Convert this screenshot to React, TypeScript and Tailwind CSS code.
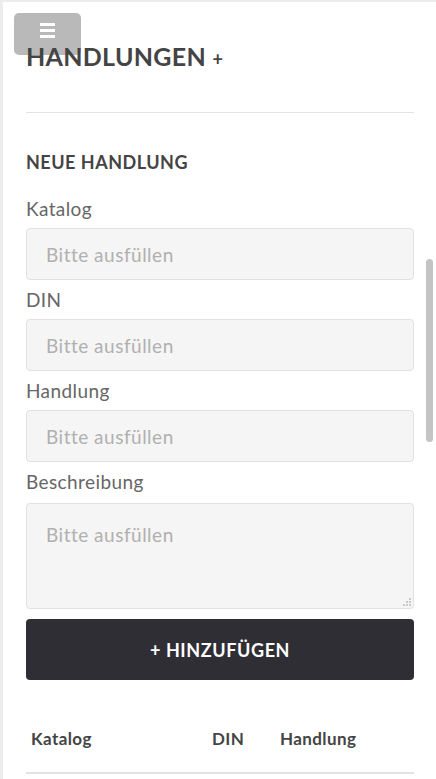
import React from "react";

const font = { fontFamily: "Lato, 'Noto Sans', sans-serif" };

function Field({ label, tall }: { label: string; tall?: boolean }) {
  return (
    <div className="flex flex-col">
      <label className="text-[19px] leading-[27px] tracking-[0.4px] text-[#666] mb-[6px]">{label}</label>
      {tall ? (
        <div className="relative mt-[2px] mb-[10px]">
          <textarea
            placeholder="Bitte ausfüllen"
            className="block h-[106px] w-full resize-none rounded-[4px] border border-[#e1e1e1] bg-[#f5f5f5] px-[19px] py-[19px] text-[19px] leading-[24px] tracking-[0.5px] text-[#444] placeholder:text-[#b0b0b0] outline-none"
          />
          {/* resize grip */}
          <svg className="absolute bottom-[3px] right-[3px]" width="8" height="8" viewBox="0 0 8 8">
            <rect x="6" y="0" width="2" height="2" fill="#c8c8c8" />
            <rect x="3" y="3" width="2" height="2" fill="#c8c8c8" />
            <rect x="6" y="3" width="2" height="2" fill="#c8c8c8" />
            <rect x="0" y="6" width="2" height="2" fill="#c8c8c8" />
            <rect x="3" y="6" width="2" height="2" fill="#c8c8c8" />
            <rect x="6" y="6" width="2" height="2" fill="#c8c8c8" />
          </svg>
        </div>
      ) : (
        <input
          placeholder="Bitte ausfüllen"
          className="h-[52px] w-full rounded-[4px] border border-[#e1e1e1] bg-[#f5f5f5] px-[19px] text-[19px] tracking-[0.5px] text-[#444] placeholder:text-[#b0b0b0] outline-none mb-[6px]"
        />
      )}
    </div>
  );
}

export default function App() {
  return (
    <div className="relative h-[779px] w-[436px] overflow-hidden bg-[#ececec] pt-[2px] pl-[3px]" style={font}>
      <div className="relative h-full bg-white pl-[23px] pr-[22px]">
        {/* menu toggle */}
        <button className="absolute left-[11px] top-[11px] flex h-[42px] w-[67px] items-center justify-center rounded-[5px] bg-[#b9b9b9]">
          <span className="flex flex-col gap-[3px] -mt-[8px]">
            <span className="block h-[3px] w-[15px] bg-white" />
            <span className="block h-[3px] w-[15px] bg-white" />
            <span className="block h-[3px] w-[15px] bg-white" />
          </span>
        </button>

        <h1 className="relative z-10 pt-[39px] text-[25px] font-bold leading-[30px] tracking-[0.3px] text-[#444]">
          HANDLUNGEN <span className="text-[18px]">+</span>
        </h1>

        <hr className="mt-[38px] border-t border-[#e3e3e3]" />

        <h2 className="mt-[37px] text-[18px] font-bold leading-[24px] tracking-[0.5px] text-[#444]">NEUE HANDLUNG</h2>

        <div className="mt-[21px]">
          <Field label="Katalog" />
          <Field label="DIN" />
          <Field label="Handlung" />
          <Field label="Beschreibung" tall />
        </div>

        <button className="flex h-[61px] w-full items-center justify-center rounded-[4px] bg-[#2f2e34] pt-[2px] text-[18px] font-bold tracking-[0.6px] text-white">
          + HINZUFÜGEN
        </button>

        <div className="mt-[46px] flex border-b-2 border-[#e3e3e3] pb-[20px] text-[17px] font-bold tracking-[0.4px] text-[#444]">
          <span className="w-[186px] pl-[5px]">Katalog</span>
          <span className="w-[68px]">DIN</span>
          <span>Handlung</span>
        </div>
      </div>

      {/* scrollbar thumb */}
      <div className="absolute left-[426px] top-[259px] h-[183px] w-[7px] rounded-full bg-[#c4c4c4]" />
    </div>
  );
}
